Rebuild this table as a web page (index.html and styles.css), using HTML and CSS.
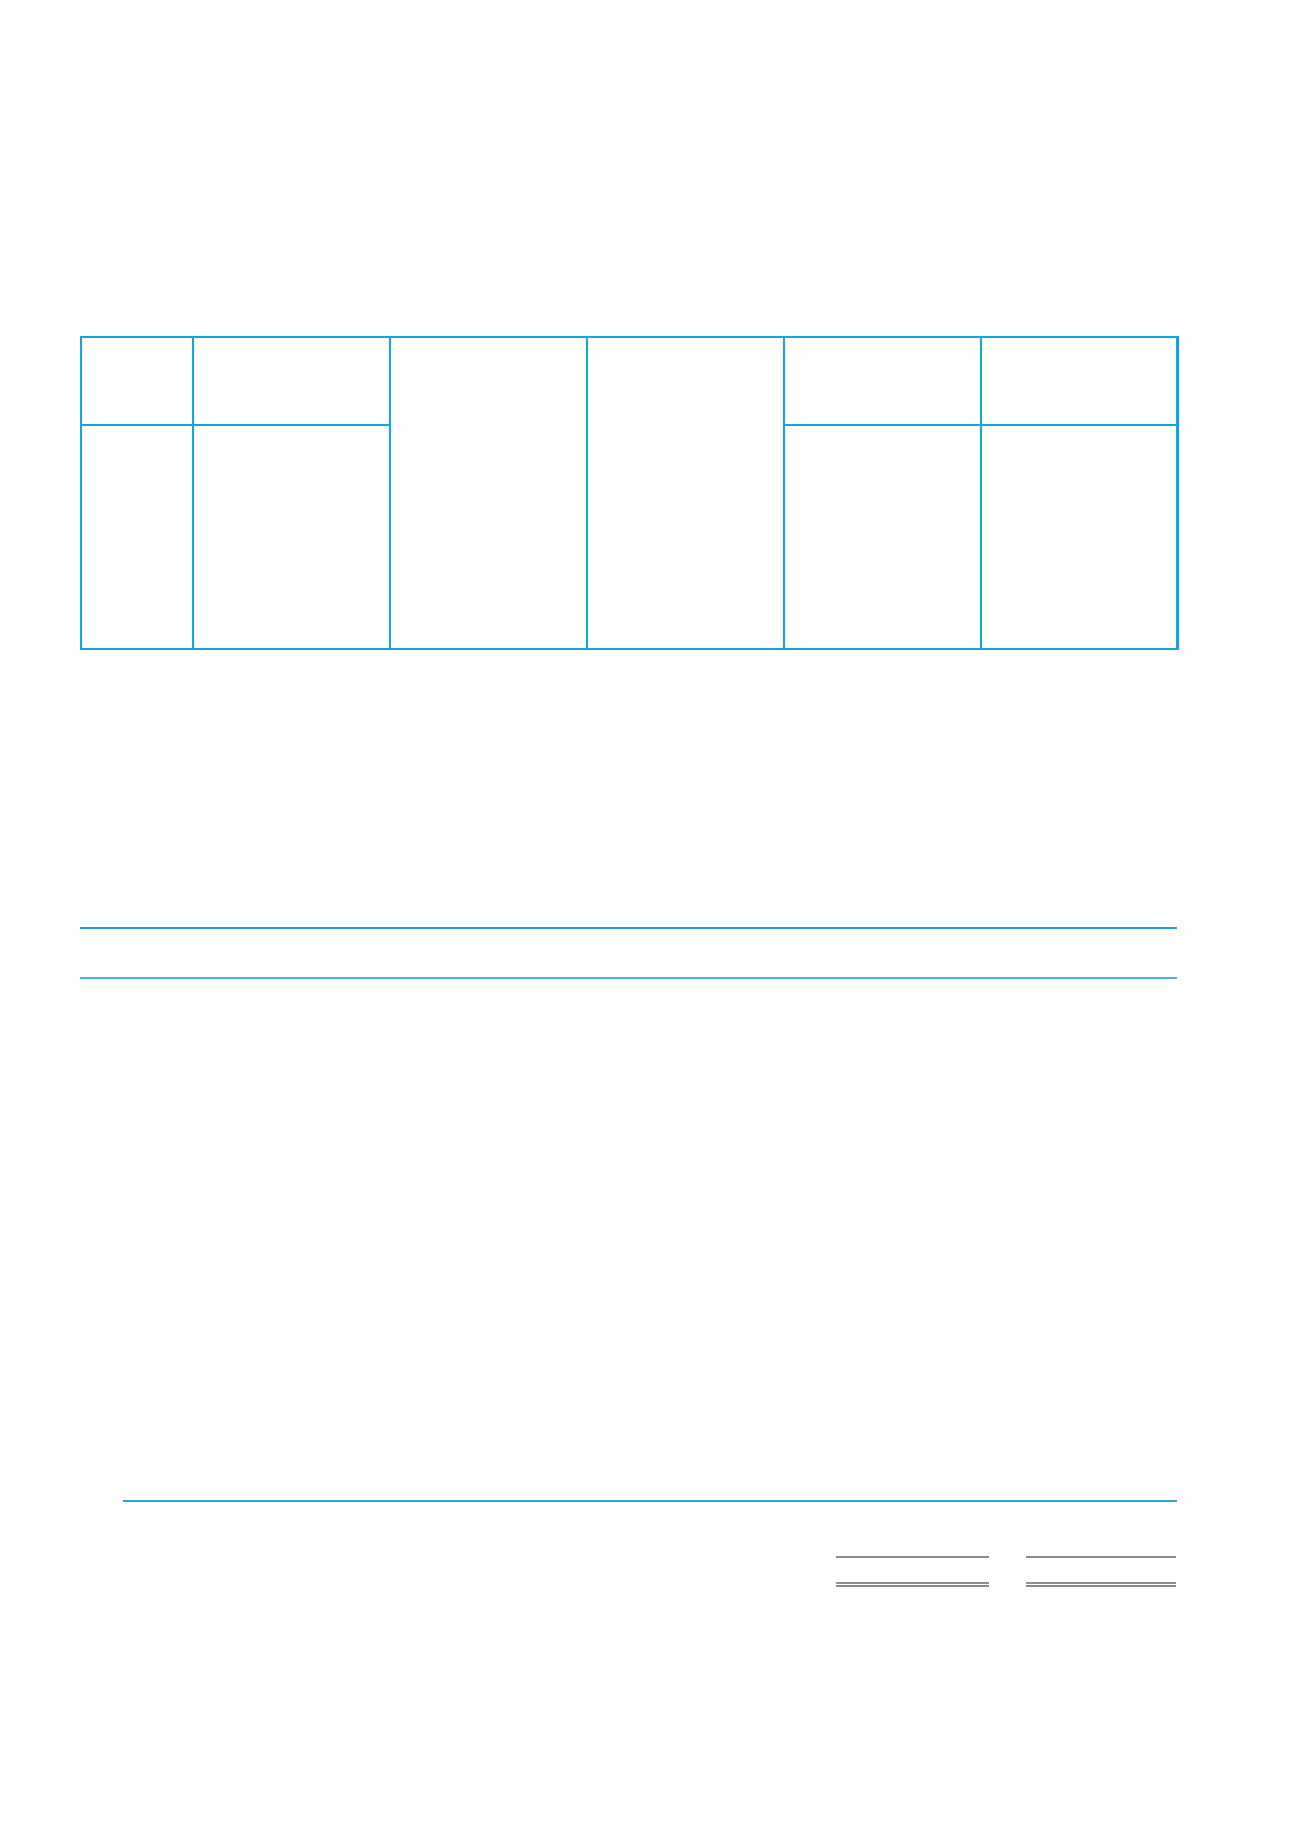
FILE: index.html
```html
<!DOCTYPE html>
<html lang="en">
<head>
<meta charset="utf-8">
<title>Statement</title>
<link rel="stylesheet" href="styles.css">
</head>
<body>
<main class="page">
  <section class="grid-table">
    <div class="cell c1 r1"></div>
    <div class="cell c2 r1"></div>
    <div class="cell c3 span"></div>
    <div class="cell c4 span"></div>
    <div class="cell c5 r1"></div>
    <div class="cell c6 r1"></div>
    <div class="cell c1 r2"></div>
    <div class="cell c2 r2"></div>
    <div class="cell c5 r2"></div>
    <div class="cell c6 r2"></div>
  </section>

  <div class="rule rule-top"></div>
  <div class="rule rule-head"></div>

  <div class="rule rule-sum"></div>

  <div class="totals">
    <div class="total total-a">
      <div class="single"></div>
      <div class="double"></div>
    </div>
    <div class="total total-b">
      <div class="single"></div>
      <div class="double"></div>
    </div>
  </div>
</main>
</body>
</html>
```

FILE: styles.css
```css
html, body {
  margin: 0;
  padding: 0;
  background: #ffffff;
  font-family: "Liberation Sans", Arial, sans-serif;
}

.page {
  width: 1300px;
  min-height: 1839px;
  box-sizing: border-box;
  padding: 336px 0 0 80px;
}

.grid-table {
  display: grid;
  width: 1099px;
  box-sizing: border-box;
  grid-template-columns: 110px 195px 195px 195px 195px 194px;
  grid-template-rows: 86px 222px;
  gap: 2px;
  padding: 2px;
  background: #0fa6e6;
}

.cell {
  background: #ffffff;
}

.c1 { grid-column: 1; }
.c2 { grid-column: 2; }
.c3 { grid-column: 3; }
.c4 { grid-column: 4; }
.c5 { grid-column: 5; }
.c6 { grid-column: 6; }
.r1 { grid-row: 1; }
.r2 { grid-row: 2; }
.span { grid-row: 1 / span 2; }

.rule {
  height: 0;
}

.rule-top {
  width: 1097px;
  margin-top: 277px;
  border-top: 2px solid #1b9fdc;
}

.rule-head {
  width: 1097px;
  margin-top: 48px;
  border-top: 2px solid #3db3e7;
}

.rule-sum {
  width: 1054px;
  margin: 521px 0 0 43px;
  border-top: 2px solid #27a6e0;
}

.totals {
  display: flex;
  gap: 37px;
  margin: 54px 0 0 756px;
}

.total-a { width: 153px; }
.total-b { width: 150px; }

.single {
  border-top: 2px solid #8c8c8c;
}

.double {
  margin-top: 24px;
  height: 1px;
  border-top: 2px solid #8f8f8f;
  border-bottom: 2px solid #8a8a8a;
}
```
